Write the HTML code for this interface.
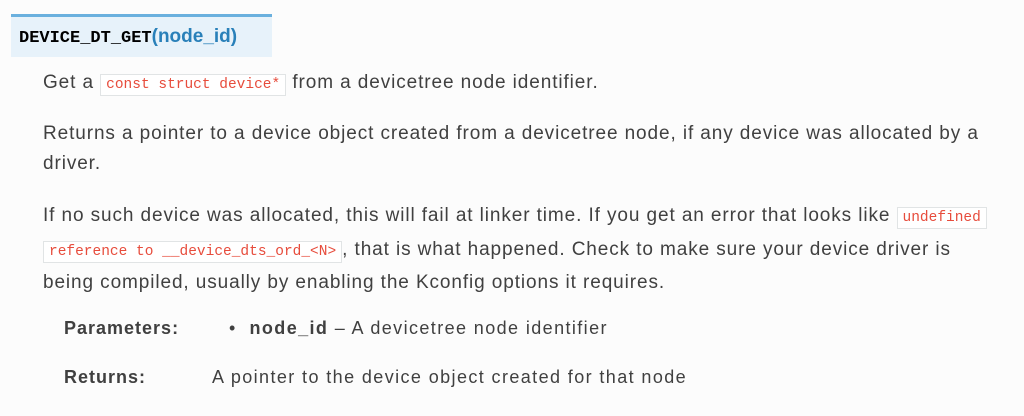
<!DOCTYPE html>
<html><head><meta charset="utf-8"><style>
body{margin:0;background:#fcfcfc;width:1024px;height:416px;overflow:hidden;font-family:"Liberation Sans",sans-serif;color:#404040;}
.hd{position:absolute;left:11px;top:14px;width:253px;height:40px;background:#e7f2fa;border-top:3px solid #6ab0de;font-family:"Liberation Mono",monospace;font-weight:bold;font-size:17px;line-height:40px;padding-left:8px;color:#000}
.hd span{color:#2980b9;font-family:"Liberation Sans",sans-serif;font-size:19px}
p{position:absolute;left:43px;margin:0;font-size:19px;letter-spacing:0.9px;line-height:30px;width:980px;white-space:nowrap}
code{font-family:"Liberation Mono",monospace;font-size:14.5px;line-height:1;letter-spacing:0;color:#e74c3c;background:#fff;border:1px solid #e1e4e5;padding:2px 5px;-webkit-box-decoration-break:clone;box-decoration-break:clone}
.lab{position:absolute;left:64px;font-weight:bold;font-size:18px;letter-spacing:1px}
.val{position:absolute;font-size:18px;letter-spacing:1.4px}
</style></head><body>
<div class="hd">DEVICE_DT_GET<span>(node_id)</span></div>
<p style="top:68px">Get a <code>const struct device*</code> from a devicetree node identifier.</p>
<p style="top:119px">Returns a pointer to a device object created from a devicetree node, if any device was allocated by a<br>driver.</p>
<p style="top:199px;line-height:33.5px">If no such device was allocated, this will fail at linker time. If you get an error that looks like <code>undefined</code><br><code>reference to __device_dts_ord_&lt;N&gt;</code>, that is what happened. Check to make sure your device driver is<br>being compiled, usually by enabling the Kconfig options it requires.</p>
<div class="lab" style="top:318px">Parameters:</div>
<div class="val" style="left:229px;top:318px">&#8226;&nbsp; <b>node_id</b> – A devicetree node identifier</div>
<div class="lab" style="top:367px">Returns:</div>
<div class="val" style="left:212px;top:367px">A pointer to the device object created for that node</div>
</body></html>
